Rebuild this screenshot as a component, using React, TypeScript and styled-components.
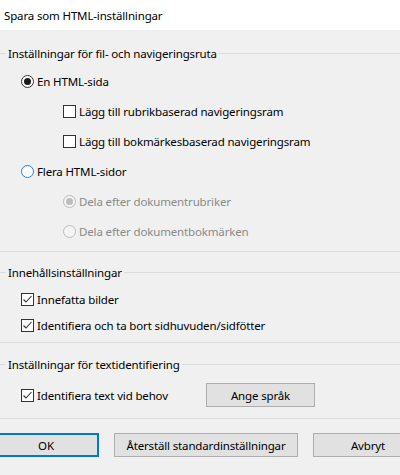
import React from "react";
import styled, { createGlobalStyle } from "styled-components";

const Global = createGlobalStyle`
  html, body { margin: 0; padding: 0; background: #f0f0f0; }
  body {
    font-family: "Noto Sans", "Open Sans", sans-serif;
    font-size: 11.5px;
    letter-spacing: -0.15px;
    color: #000;
  }
  * { box-sizing: border-box; }
`;

const Window = styled.div`
  width: 400px;
  height: 475px;
  overflow: hidden;
  background: #f0f0f0;
  display: flex;
  flex-direction: column;
`;

const TitleBar = styled.div`
  height: 30px;
  background: #fff;
  display: flex;
  align-items: center;
  padding-left: 4px;
  flex: none;
`;

const Group = styled.section<{ $top: number; $bottom: number }>`
  margin-top: ${(p) => p.$top}px;
  padding-bottom: ${(p) => p.$bottom}px;
  border-bottom: 1px solid #dcdcdc;
  display: flex;
  flex-direction: column;
`;

const GroupHeader = styled.div`
  height: 14px;
  display: flex;
  align-items: center;
  gap: 2px;
  &::before {
    content: "";
    width: 6px;
    border-top: 1px solid #dcdcdc;
  }
  &::after {
    content: "";
    flex: 1;
    border-top: 1px solid #dcdcdc;
  }
`;

const HeaderText = styled.span`
  white-space: nowrap;
`;

const List = styled.div<{ $gap: number }>`
  margin-top: ${(p) => p.$gap}px;
  display: flex;
  flex-direction: column;
`;

const Row = styled.label<{ $h: number; $indent: number; $disabled?: boolean }>`
  height: ${(p) => p.$h}px;
  padding-left: ${(p) => p.$indent}px;
  display: flex;
  align-items: center;
  gap: 3px;
  white-space: nowrap;
  color: ${(p) => (p.$disabled ? "#8a8a8a" : "#000")};
`;

type RadioState = "on" | "off" | "focus" | "disOn" | "disOff";

const RadioCircle = styled.span<{ $state: RadioState }>`
  width: 13px;
  height: 13px;
  border-radius: 50%;
  flex: none;
  display: flex;
  align-items: center;
  justify-content: center;
  background: ${(p) => (p.$state.startsWith("dis") ? "#f4f4f4" : "#fff")};
  border: 1px solid
    ${(p) =>
      p.$state === "focus"
        ? "#2f7ec4"
        : p.$state.startsWith("dis")
        ? "#bcbcbc"
        : "#333"};
  &::after {
    content: "";
    display: ${(p) => (p.$state === "on" || p.$state === "disOn" ? "block" : "none")};
    width: 7px;
    height: 7px;
    border-radius: 50%;
    background: ${(p) => (p.$state === "disOn" ? "#bcbcbc" : "#1a1a1a")};
  }
`;

const Box = styled.span`
  width: 13px;
  height: 13px;
  flex: none;
  border: 1px solid #333;
  background: #fff;
  display: flex;
  align-items: center;
  justify-content: center;
`;

const Check = () => (
  <svg width="11" height="11" viewBox="0 0 11 11">
    <path d="M1.5 5.5 L4 8 L9.5 2" fill="none" stroke="#333" strokeWidth="1.1" />
  </svg>
);

const LangRow = styled.div`
  margin-top: 12px;
  height: 24px;
  display: grid;
  grid-template-columns: 185px 109px;
  padding-left: 21px;
  align-items: center;
`;

const Button = styled.button<{ $w: number; $default?: boolean }>`
  width: ${(p) => p.$w}px;
  height: 24px;
  flex: none;
  font: inherit;
  letter-spacing: inherit;
  color: #000;
  background: #e1e1e1;
  border: ${(p) => (p.$default ? "2px solid #0078d7" : "1px solid #adadad")};
  padding: 0;
  display: flex;
  align-items: center;
  justify-content: center;
`;

const ButtonBar = styled.div`
  margin-top: 14px;
  margin-left: -7px;
  display: flex;
  gap: 15px;
`;

function Radio({ state, label, indent, disabled }: { state: RadioState; label: string; indent: number; disabled?: boolean }) {
  return (
    <Row $h={30} $indent={indent} $disabled={disabled}>
      <RadioCircle $state={state} />
      {label}
    </Row>
  );
}

function CheckRow({ label, checked, indent, h }: { label: string; checked?: boolean; indent: number; h: number }) {
  return (
    <Row $h={h} $indent={indent}>
      <Box>{checked && <Check />}</Box>
      {label}
    </Row>
  );
}

export default function App() {
  return (
    <>
      <Global />
      <Window>
        <TitleBar>Spara som HTML-inställningar</TitleBar>

        <Group $top={16} $bottom={5}>
          <GroupHeader>
            <HeaderText>Inställningar för fil- och navigeringsruta</HeaderText>
          </GroupHeader>
          <List $gap={6}>
            <Radio state="on" label="En HTML-sida" indent={21} />
            <CheckRow h={30} indent={63} label="Lägg till rubrikbaserad navigeringsram" />
            <CheckRow h={30} indent={63} label="Lägg till bokmärkesbaserad navigeringsram" />
            <Radio state="focus" label="Flera HTML-sidor" indent={21} />
            <Radio state="disOn" label="Dela efter dokumentrubriker" indent={63} disabled />
            <Radio state="disOff" label="Dela efter dokumentbokmärken" indent={63} disabled />
          </List>
        </Group>

        <Group $top={13} $bottom={4}>
          <GroupHeader>
            <HeaderText>Innehållsinställningar</HeaderText>
          </GroupHeader>
          <List $gap={7}>
            <CheckRow h={26} indent={21} checked label="Innefatta bilder" />
            <CheckRow h={26} indent={21} checked label="Identifiera och ta bort sidhuvuden/sidfötter" />
          </List>
        </Group>

        <Group $top={14} $bottom={11}>
          <GroupHeader>
            <HeaderText>Inställningar för textidentifiering</HeaderText>
          </GroupHeader>
          <LangRow>
            <CheckRow h={24} indent={0} checked label="Identifiera text vid behov" />
            <Button $w={109}>Ange språk</Button>
          </LangRow>
        </Group>

        <ButtonBar>
          <Button $w={106} $default>
            OK
          </Button>
          <Button $w={184}>Återställ standardinställningar</Button>
          <Button $w={110}>Avbryt</Button>
        </ButtonBar>
      </Window>
    </>
  );
}
